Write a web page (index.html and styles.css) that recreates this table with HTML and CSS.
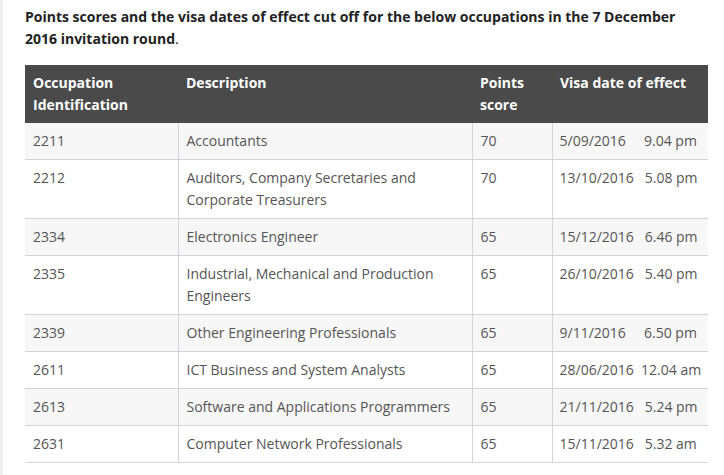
FILE: index.html
```html
<!DOCTYPE html>
<html>
<head>
<meta charset="utf-8">
<link rel="stylesheet" href="styles.css">
</head>
<body>
<div class="page">
  <p class="intro">Points scores and the visa dates of effect cut off for the below occupations in the 7 December 2016 invitation round<span class="dot">.</span></p>
  <table class="scores">
    <colgroup>
      <col class="c1"><col class="c2"><col class="c3"><col class="c4">
    </colgroup>
    <thead>
      <tr><th>Occupation Identification</th><th>Description</th><th>Points score</th><th>Visa date of effect</th></tr>
    </thead>
    <tbody>
      <tr><td>2211</td><td>Accountants</td><td>70</td><td class="when">5/09/2016&nbsp;&nbsp;&nbsp;&nbsp;&nbsp;9.04 pm</td></tr>
      <tr><td>2212</td><td>Auditors, Company Secretaries and Corporate Treasurers</td><td>70</td><td class="when">13/10/2016&nbsp;&nbsp;&nbsp;5.08 pm</td></tr>
      <tr><td>2334</td><td>Electronics Engineer</td><td>65</td><td class="when">15/12/2016&nbsp;&nbsp;&nbsp;6.46 pm</td></tr>
      <tr><td>2335</td><td>Industrial, Mechanical and Production Engineers</td><td>65</td><td class="when">26/10/2016&nbsp;&nbsp;&nbsp;5.40 pm</td></tr>
      <tr><td>2339</td><td>Other Engineering Professionals</td><td>65</td><td class="when">9/11/2016&nbsp;&nbsp;&nbsp;&nbsp;&nbsp;6.50 pm</td></tr>
      <tr><td>2611</td><td>ICT Business and System Analysts</td><td>65</td><td class="when">28/06/2016&nbsp;&nbsp;12.04 am</td></tr>
      <tr><td>2613</td><td>Software and Applications Programmers</td><td>65</td><td class="when">21/11/2016&nbsp;&nbsp;&nbsp;5.24 pm</td></tr>
      <tr><td>2631</td><td>Computer Network Professionals</td><td>65</td><td class="when">15/11/2016&nbsp;&nbsp;&nbsp;5.32 am</td></tr>
    </tbody>
  </table>
</div>
</body>
</html>
```
FILE: styles.css
```css
html, body {
  margin: 0;
  padding: 0;
  background: #ffffff;
}
body {
  font-family: "Open Sans", "Liberation Sans", sans-serif;
  font-size: 14px;
  line-height: 22px;
  color: #555555;
}
.page {
  border-left: 3px solid #eeeeee;
  min-height: 475px;
  box-sizing: border-box;
  padding: 6px 16px 0 22px;
}
.intro {
  margin: 0 0 15px 0;
  font-weight: 700;
  color: #222222;
  width: 670px;
}
.intro .dot {
  font-weight: 400;
}
.scores {
  border-collapse: collapse;
  table-layout: fixed;
  width: 683px;
}
.c1 { width: 153px; }
.c2 { width: 294px; }
.c3 { width: 80px; }
.c4 { width: 156px; }
.scores th {
  background: #4a4a4a;
  color: #ffffff;
  font-weight: 700;
  text-align: left;
  vertical-align: top;
  padding: 7px 8px;
}
.scores td {
  vertical-align: top;
  padding: 7px 7px 7px 8px;
  border-bottom: 1px solid #d4d3d9;
  border-left: 1px solid #d4d3d9;
}
.scores td:first-child {
  border-left: none;
}
.scores td.when {
  white-space: nowrap;
  padding-left: 7px;
  padding-right: 2px;
}
.scores tbody tr:nth-child(odd) td {
  background: #f7f7f7;
}
```
